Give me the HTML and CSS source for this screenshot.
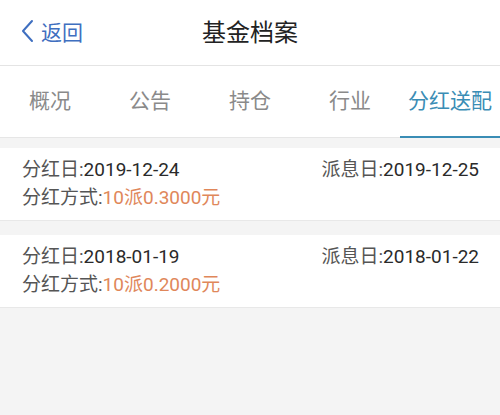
FILE: index.html
```html
<!DOCTYPE html>
<html lang="zh-CN">
<head>
    <meta charset="UTF-8">
    <meta name="viewport" content="width=device-width, initial-scale=1.0">
    <title>基金档案</title>
    <link rel="stylesheet" href="styles.css">
</head>
<body>
    <header class="top-bar">
        <a class="back" href="#">
            <svg class="back-icon" width="14" height="24" viewBox="0 0 14 24">
                <path d="M12 2 L3 12 L12 22" fill="none" stroke="#3f6fc0" stroke-width="2" stroke-linecap="round" stroke-linejoin="round"/>
            </svg>
            <span>返回</span>
        </a>
        <h1 class="title">基金档案</h1>
    </header>

    <nav class="tabs">
        <div class="tab">概况</div>
        <div class="tab">公告</div>
        <div class="tab">持仓</div>
        <div class="tab">行业</div>
        <div class="tab active">分红送配</div>
    </nav>

    <div class="list">
        <div class="item">
            <div class="row">
                <span><span class="label">分红日:</span>2019-12-24</span>
                <span><span class="label">派息日:</span>2019-12-25</span>
            </div>
            <div class="row">
                <span><span class="label">分红方式:</span><span class="amount">10派0.3000元</span></span>
            </div>
        </div>
        <div class="item">
            <div class="row">
                <span><span class="label">分红日:</span>2018-01-19</span>
                <span><span class="label">派息日:</span>2018-01-22</span>
            </div>
            <div class="row">
                <span><span class="label">分红方式:</span><span class="amount">10派0.2000元</span></span>
            </div>
        </div>
    </div>
</body>
</html>
```

FILE: styles.css
```css
body {
    margin: 0;
    background-color: #f4f4f4;
    font-family: Roboto, "Noto Sans CJK SC", sans-serif;
    height: 415px;
    overflow: hidden;
}
.top-bar {
    position: relative;
    height: 66px;
    box-sizing: border-box;
    padding-bottom: 5px;
    background-color: #fff;
    border-bottom: 1px solid #e4e4e4;
    display: flex;
    align-items: center;
    justify-content: center;
}
.back {
    position: absolute;
    left: 20px;
    top: 0;
    height: 61px;
    display: flex;
    align-items: center;
    gap: 7px;
    color: #3f6fc0;
    text-decoration: none;
    font-size: 21px;
}
.title {
    margin: 0;
    font-size: 24px;
    font-weight: normal;
    color: #222;
}
.tabs {
    display: flex;
    height: 72px;
    box-sizing: border-box;
    background-color: #fff;
    border-bottom: 1px solid #e6e6e6;
}
.tab {
    flex: 1;
    display: flex;
    align-items: center;
    justify-content: center;
    padding-bottom: 5px;
    font-size: 21px;
    color: #8a8a8a;
    border-bottom: 2px solid transparent;
    margin-bottom: -1px;
}
.tab.active {
    color: #3a8db5;
    border-bottom-color: #3a8db5;
}
.list {
    padding-top: 10px;
    display: flex;
    flex-direction: column;
    gap: 14px;
}
.item {
    background-color: #fff;
    padding: 8px 21px 8px 22px;
    border-bottom: 1px solid #e8e8e8;
    font-size: 19px;
    line-height: 28px;
    color: #2a2a2a;
}
.row {
    display: flex;
    justify-content: space-between;
}
.label {
    color: #555;
}
.amount {
    color: #e0875a;
}
```
